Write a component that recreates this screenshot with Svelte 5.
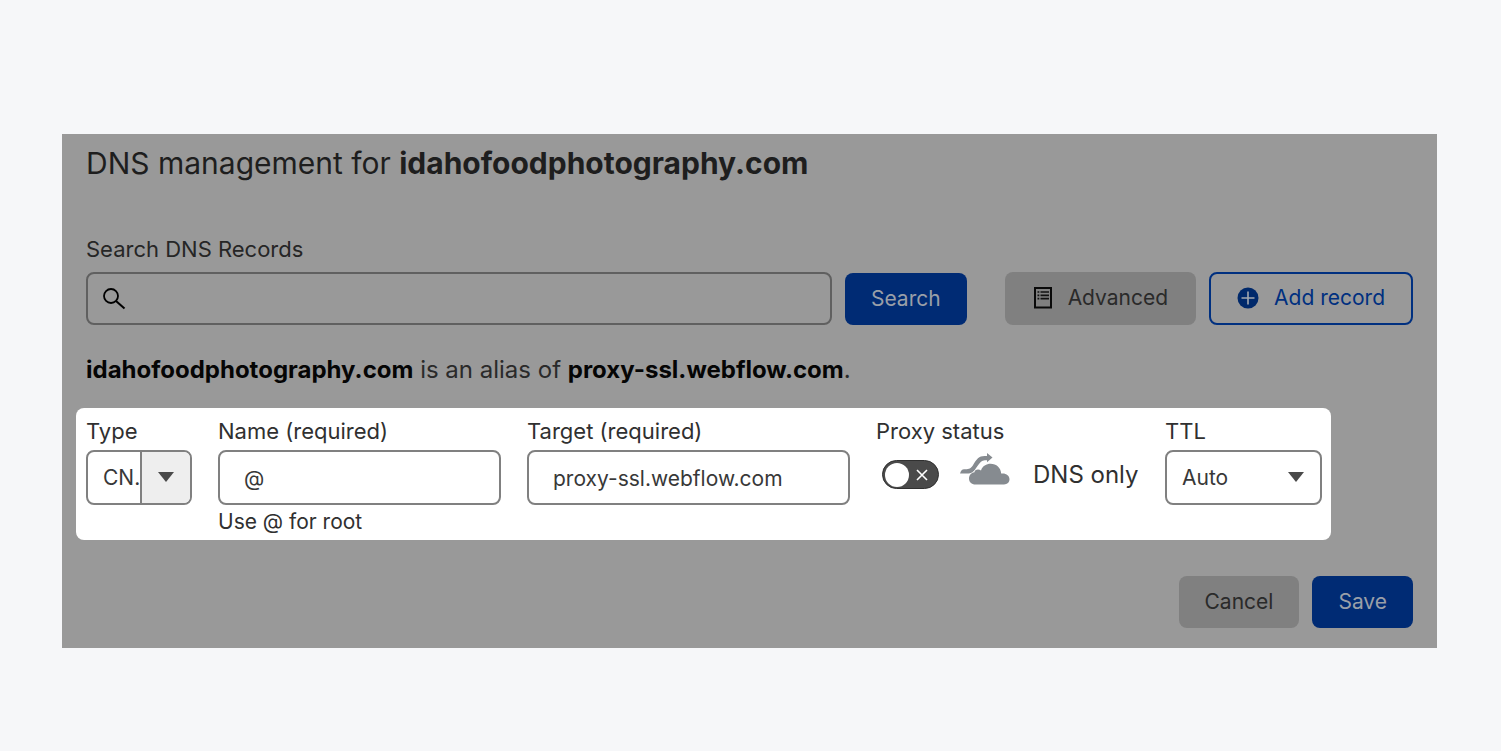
<script>
	let domain = 'idahofoodphotography.com';
	let query = $state('');
	let type = $state('CNAME');
	let name = $state('@');
	let target = $state('proxy-ssl.webflow.com');
	let proxied = $state(false);
	let ttl = $state('auto');
</script>

<main>
	<div class="panel">
		<h1>DNS management for <strong>{domain}</strong></h1>

		<label class="search-label" for="search">Search DNS Records</label>
		<div class="toolbar">
			<div class="search-box">
				<svg width="24" height="24" viewBox="0 0 24 24" fill="none" stroke="#000" stroke-width="1.8">
					<circle cx="9" cy="10" r="7" />
					<path d="M14 15l8.500 7.500" stroke-width="2" />
				</svg>
				<input id="search" type="text" bind:value={query} />
			</div>
			<button class="primary">Search</button>
			<button class="grey advanced">
				<svg width="20" height="22" viewBox="0 0 20 22">
					<rect x="2" y="1" width="16" height="19.5" fill="none" stroke="#0a0a0a" stroke-width="2" />
					<path d="M7.5 5H16M7.5 8.3H16M7.5 11.6H16" stroke="#111" stroke-width="1.7" />
					<path d="M4.5 5h1.8M4.5 8.3h1.8M4.5 11.6h1.8" stroke="#111" stroke-width="1.7" />
				</svg>
				Advanced
			</button>
			<button class="outline">
				<svg width="22" height="22" viewBox="0 0 22 22">
					<circle cx="11" cy="11" r="10.5" fill="#00296b" />
					<path d="M11 4.5v13M4.5 11h13" stroke="#a3a8b0" stroke-width="1.6" />
				</svg>
				Add record
			</button>
		</div>

		<p class="alias"><strong>{domain}</strong> is an alias of <strong>{target}</strong>.</p>

		<div class="record">
			<div class="field">
				<label for="type">Type</label>
				<div class="select split">
					<select id="type" bind:value={type}>
						<option value="CNAME">CN.</option>
						<option value="A">A</option>
						<option value="TXT">TXT</option>
					</select>
					<span class="arrow">
						<svg width="16" height="10" viewBox="0 0 16 10"><path d="M0 0h16L8 10z" fill="#4a4a4a" /></svg>
					</span>
				</div>
			</div>
			<div class="field">
				<label for="name">Name (required)</label>
				<input id="name" type="text" bind:value={name} />
				<small>Use @ for root</small>
			</div>
			<div class="field">
				<label for="target">Target (required)</label>
				<input id="target" type="text" bind:value={target} />
			</div>
			<div class="field">
				<label for="proxy">Proxy status</label>
				<div class="proxy">
					<span class="toggle">
						<input id="proxy" type="checkbox" bind:checked={proxied} />
						<svg width="12" height="12" viewBox="0 0 12 12"><path d="M1 1l10 10M11 1L1 11" stroke="#fff" stroke-width="1.6" /></svg>
					</span>
					<svg class="cloud" width="50" height="44" viewBox="0 0 50 44" fill="#868b90">
						<path d="M15.500 31.500C11.500 31.500 9 29 9 25.500c0-3.500 2.500-6 5.500-6.300-.2-2.700 4.200-3.800 6.500-1.700C22.500 13 26.500 10.800 30.500 10.800c6 0 10.300 4.200 10.700 9.700 5-.6 8.300 2.200 8.300 5.800 0 3-2.200 5.200-5.500 5.200z" />
						<path d="M0 20.500C1 17.500 2 16.200 4 16.200c5 .2 6.500-.5 8.800-3.700C16.500 6 19 3 24.500 3H27V0l5.500 4.600L27 9.200V7.200h-2.200c-3 0-4.800 2-7.500 6C14 18.500 11.500 20.600 7 20.600z" />
					</svg>
					<span class="status">DNS only</span>
				</div>
			</div>
			<div class="field">
				<label for="ttl">TTL</label>
				<div class="select">
					<select id="ttl" bind:value={ttl}>
						<option value="auto">Auto</option>
						<option value="3600">1 hr</option>
					</select>
					<span class="arrow">
						<svg width="16" height="10" viewBox="0 0 16 10"><path d="M0 0h16L8 10z" fill="#4a4a4a" /></svg>
					</span>
				</div>
			</div>
		</div>

		<div class="actions">
			<button class="grey">Cancel</button>
			<button class="primary">Save</button>
		</div>
	</div>
</main>

<style>
	:global(body) {
		margin: 0;
		background: #f6f7f9;
	}

	main {
		display: flex;
		align-items: center;
		box-sizing: border-box;
		min-height: 100vh;
		padding: 30px 64px 0 62px;
		font-family: Inter, sans-serif;
		font-size: 22px;
		line-height: 28px;
		color: #303030;
	}

	.panel {
		flex: 1;
		min-width: 0;
		padding: 8px 24px 20px;
		background: #999;
	}

	h1 {
		margin: 0 0 51px;
		font-size: 30px;
		line-height: 42px;
		font-weight: 400;
		color: #1e1e1e;
	}

	strong {
		font-weight: 700;
	}

	.search-label {
		display: block;
		margin-bottom: 9px;
		color: #262626;
	}

	input,
	select,
	button {
		box-sizing: border-box;
		margin: 0;
		font: inherit;
		font-size: 21px;
		color: inherit;
	}

	.toolbar {
		display: flex;
		align-items: flex-end;
		gap: 13px;
	}

	.search-box {
		display: flex;
		flex: 1;
		align-items: center;
		gap: 12px;
		box-sizing: border-box;
		height: 53px;
		min-width: 0;
		padding: 0 14px;
		border: 2px solid #606060;
		border-radius: 8px;
	}

	.search-box input {
		flex: 1;
		min-width: 0;
		padding: 0;
		border: 0;
		outline: none;
		background: transparent;
	}

	button {
		display: flex;
		align-items: center;
		gap: 15px;
		height: 52px;
		padding: 0 26px;
		border: 0;
		border-radius: 8px;
		white-space: nowrap;
		cursor: pointer;
	}

	.primary {
		background: #002b74;
		color: #999fa8;
	}

	.grey {
		background: #808080;
		color: #2a2a2a;
	}

	.advanced {
		height: 53px;
		margin-left: 25px;
		padding: 0 28px;
	}

	.outline {
		height: 53px;
		border: 2px solid #003080;
		background: transparent;
		color: #003080;
	}

	.alias {
		margin: 28px 0 21px;
		font-size: 24px;
		line-height: 34px;
		color: #2a2a2a;
	}

	.alias strong {
		color: #050505;
	}

	.record {
		display: grid;
		grid-template-columns: 106px 283fr 323fr 263px 157px;
		gap: 26px;
		margin: 0 82px 36px -10px;
		padding: 9px 9px 4px 10px;
		border-radius: 8px;
		background: #fff;
	}

	.field {
		display: flex;
		flex-direction: column;
		min-width: 0;
	}

	.field label {
		margin-bottom: 5px;
	}

	.field > input,
	.select select {
		width: 100%;
		height: 55px;
		border: 2px solid #808080;
		border-radius: 8px;
		outline: none;
		background: #fff;
		color: #383838;
	}

	.field > input {
		padding: 2px 24px 0;
	}

	small {
		margin-top: 3px;
		font-size: 21px;
	}

	.select {
		position: relative;
	}

	.select select {
		display: block;
		padding: 2px 48px 0 15px;
		appearance: none;
	}

	.arrow {
		position: absolute;
		top: 2px;
		right: 2px;
		bottom: 2px;
		display: flex;
		align-items: center;
		justify-content: center;
		width: 48px;
		border-radius: 0 6px 6px 0;
		pointer-events: none;
	}

	.split .arrow {
		border-left: 2px solid #808080;
		background: #eee;
	}

	.proxy {
		display: flex;
		align-items: center;
		height: 50px;
		padding-left: 6px;
	}

	.toggle {
		position: relative;
		display: flex;
		margin-right: 21px;
	}

	.toggle input {
		display: flex;
		align-items: center;
		width: 57px;
		height: 29px;
		padding: 2px;
		border: 1px solid #303030;
		border-radius: 15px;
		background: #4a4a4a;
		appearance: none;
	}

	.toggle input::before {
		content: '';
		width: 24px;
		height: 24px;
		border-radius: 50%;
		background: #fff;
	}

	.toggle input:checked {
		justify-content: flex-end;
	}

	.toggle svg {
		position: absolute;
		top: 9px;
		right: 11px;
		pointer-events: none;
	}

	.toggle input:checked + svg {
		display: none;
	}

	.cloud {
		flex-shrink: 0;
	}

	.status {
		margin-left: 23px;
		font-size: 24px;
		white-space: nowrap;
	}

	.actions {
		display: flex;
		justify-content: flex-end;
		gap: 13px;
	}
</style>
